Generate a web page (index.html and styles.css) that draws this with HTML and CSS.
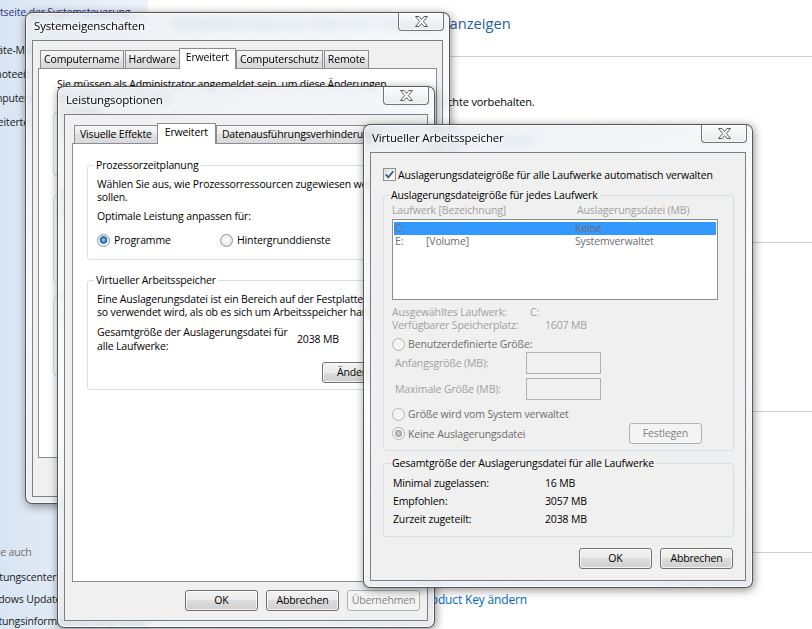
FILE: index.html
```html
<!DOCTYPE html>
<html lang="de">
<head>
    <meta charset="UTF-8">
    <title>System</title>
    <link rel="stylesheet" href="styles.css">
</head>
<body>
<div class="desktop">
    <!-- Systemsteuerung im Hintergrund -->
    <div class="page">
        <div class="nav">
            <ul class="nav-top">
                <li class="home">Startseite der Systemsteuerung</li>
                <li>Geräte-Manager</li>
                <li>Remoteeinstellungen</li>
                <li>Computerschutz</li>
                <li>Erweiterte Systemeinstellungen</li>
            </ul>
            <ul class="nav-bottom">
                <li class="see">Siehe auch</li>
                <li>Wartungscenter</li>
                <li>Windows Update</li>
                <li>Leistungsinformationen und -tools</li>
            </ul>
        </div>
        <div class="content">
            <h1>Basisinformationen über den Computer anzeigen</h1>
            <div class="section s-edition">Windows-Edition</div>
            <p class="line edition">Windows 7 Home Premium</p>
            <p class="line copy">Copyright © 2009 Microsoft Corporation. Alle Rechte vorbehalten.</p>
            <p class="line more"><a href="javascript:;">Weitere Features mit einer neuen Edition von Windows 7 erhalten</a></p>
            <div class="section s-system">System</div>
            <div class="section s-name">Einstellungen für Computernamen, Domäne und Arbeitsgruppe</div>
            <div class="section s-act">Windows-Aktivierung</div>
            <p class="line key"><a href="javascript:;">Product Key ändern</a></p>
        </div>
    </div>

    <!-- Systemeigenschaften -->
    <div class="window win-sys">
        <div class="titlebar">
            <span class="title">Systemeigenschaften</span>
            <div class="close"><svg width="15" height="11" viewBox="0 0 15 11"><path d="M1.5 .5h3.5l2.5 3 2.5-3h3.5l-4.2 5 4.2 5h-3.5l-2.5-3-2.5 3h-3.5l4.2-5z" fill="#fff" stroke="#5a5a5a" stroke-linejoin="round"/></svg></div>
        </div>
        <div class="client sys-body">
            <div class="tabs sys-tabs">
                <div class="tab">Computername</div>
                <div class="tab">Hardware</div>
                <div class="tab active">Erweitert</div>
                <div class="tab">Computerschutz</div>
                <div class="tab">Remote</div>
            </div>
            <div class="tabpanel">
                <p class="admin">Sie müssen als Administrator angemeldet sein, um diese Änderungen<br>durchführen zu können.</p>
                <fieldset class="group sys-group g1">
                    <legend>Leistung</legend>
                    <div class="gbody">Visuelle Effekte, Prozessorzeitplanung, Speichernutzung und virtueller Arbeitsspeicher</div>
                </fieldset>
                <fieldset class="group sys-group g2">
                    <legend>Benutzerprofile</legend>
                    <div class="gbody">Desktopeinstellungen bezüglich der Anmeldung</div>
                </fieldset>
                <fieldset class="group sys-group g3">
                    <legend>Starten und Wiederherstellen</legend>
                    <div class="gbody">Systemstart, Systemfehler und Debuginformationen</div>
                </fieldset>
            </div>
            <div class="buttons">
                <button class="btn">OK</button>
                <button class="btn">Abbrechen</button>
                <button class="btn off">Übernehmen</button>
            </div>
        </div>
    </div>

    <!-- Leistungsoptionen -->
    <div class="window win-perf">
        <div class="titlebar">
            <span class="title">Leistungsoptionen</span>
            <div class="close"><svg width="15" height="11" viewBox="0 0 15 11"><path d="M1.5 .5h3.5l2.5 3 2.5-3h3.5l-4.2 5 4.2 5h-3.5l-2.5-3-2.5 3h-3.5l4.2-5z" fill="#fff" stroke="#5a5a5a" stroke-linejoin="round"/></svg></div>
        </div>
        <div class="client perf-body">
            <div class="tabs">
                <div class="tab">Visuelle Effekte</div>
                <div class="tab active">Erweitert</div>
                <div class="tab">Datenausführungsverhinderung</div>
            </div>
            <div class="tabpanel perf-panel">
                <fieldset class="group perf-group cpu">
                    <legend>Prozessorzeitplanung</legend>
                    <p class="text">Wählen Sie aus, wie Prozessorressourcen zugewiesen werden<br>sollen.</p>
                    <p class="text tune">Optimale Leistung anpassen für:</p>
                    <div class="row radios">
                        <div class="opt opt-prog"><span class="radio on"></span>Programme</div>
                        <div class="opt"><span class="radio"></span>Hintergrunddienste</div>
                    </div>
                </fieldset>
                <fieldset class="group perf-group mem">
                    <legend>Virtueller Arbeitsspeicher</legend>
                    <p class="text">Eine Auslagerungsdatei ist ein Bereich auf der Festplatte, der von Windows<br>so verwendet wird, als ob es sich um Arbeitsspeicher handeln würde.</p>
                    <div class="row total">
                        <span class="total-label">Gesamtgröße der Auslagerungsdatei für<br>alle Laufwerke:</span>
                        <span>2038 MB</span>
                    </div>
                    <div class="row change">
                        <button class="btn">Ändern...</button>
                    </div>
                </fieldset>
            </div>
            <div class="buttons">
                <button class="btn">OK</button>
                <button class="btn">Abbrechen</button>
                <button class="btn off">Übernehmen</button>
            </div>
        </div>
    </div>

    <!-- Virtueller Arbeitsspeicher -->
    <div class="window win-vm">
        <div class="titlebar">
            <span class="title">Virtueller Arbeitsspeicher</span>
            <div class="close"><svg width="15" height="11" viewBox="0 0 15 11"><path d="M1.5 .5h3.5l2.5 3 2.5-3h3.5l-4.2 5 4.2 5h-3.5l-2.5-3-2.5 3h-3.5l4.2-5z" fill="#fff" stroke="#5a5a5a" stroke-linejoin="round"/></svg></div>
        </div>
        <div class="client vm-body">
            <div class="row auto">
                <span class="check"><svg width="11" height="11" viewBox="0 0 11 11"><path d="M1.8 5.4 4.3 8.3 9.3 2.2" fill="none" stroke="#40577f" stroke-width="1.8"/></svg></span>
                <span>Auslagerungsdateigröße für alle Laufwerke automatisch verwalten</span>
            </div>
            <fieldset class="group drives">
                <legend>Auslagerungsdateigröße für jedes Laufwerk</legend>
                <div class="row cols dim">
                    <span class="col-drive">Laufwerk [Bezeichnung]</span>
                    <span>Auslagerungsdatei (MB)</span>
                </div>
                <div class="listbox">
                    <div class="lrow sel"><span class="l-drive">C:</span><span class="l-name"></span><span>Keine</span></div>
                    <div class="lrow"><span class="l-drive">E:</span><span class="l-name">[Volume]</span><span>Systemverwaltet</span></div>
                </div>
                <div class="info dim">
                    <div class="irow"><span class="i-sel">Ausgewähltes Laufwerk:</span><span>C:</span></div>
                    <div class="irow"><span class="i-free">Verfügbarer Speicherplatz:</span><span>1607 MB</span></div>
                </div>
                <div class="row opt-row custom"><span class="radio off"></span><span class="dimr">Benutzerdefinierte Größe:</span></div>
                <div class="row size first"><span class="size-label dim">Anfangsgröße (MB):</span><span class="field"></span></div>
                <div class="row size second"><span class="size-label dim">Maximale Größe (MB):</span><span class="field"></span></div>
                <div class="row opt-row sys"><span class="radio off"></span><span class="dimr">Größe wird vom System verwaltet</span></div>
                <div class="row opt-row none">
                    <span class="radio off on"></span><span class="dimr">Keine Auslagerungsdatei</span>
                    <button class="btn off set">Festlegen</button>
                </div>
            </fieldset>
            <fieldset class="group totals">
                <legend>Gesamtgröße der Auslagerungsdatei für alle Laufwerke</legend>
                <div class="trow"><span class="t-label">Minimal zugelassen:</span><span>16 MB</span></div>
                <div class="trow"><span class="t-label">Empfohlen:</span><span>3057 MB</span></div>
                <div class="trow"><span class="t-label">Zurzeit zugeteilt:</span><span>2038 MB</span></div>
            </fieldset>
            <div class="buttons vm-buttons">
                <button class="btn">OK</button>
                <button class="btn">Abbrechen</button>
            </div>
        </div>
    </div>
</div>
</body>
</html>
```

FILE: styles.css
```css
body {
    margin: 0;
}

p {
    margin: 0;
}

a {
    color: #0066cc;
    text-decoration: none;
}

.desktop {
    position: relative;
    width: 812px;
    height: 629px;
    overflow: hidden;
    background: #fff;
    font-family: "Open Sans", "Noto Sans", sans-serif;
    font-size: 10.5px;
    letter-spacing: -0.15px;
    color: #000;
}

/* Hintergrundseite */
.page {
    display: flex;
    height: 100%;
}

.nav {
    display: flex;
    flex-direction: column;
    justify-content: space-between;
    width: 148px;
    flex: none;
    overflow: hidden;
    background: linear-gradient(to right, #dae5f3, #e7eef8 70%, #edf3fa);
}

.nav ul {
    list-style: none;
    margin: 0 0 0 -20px;
    padding: 0;
}

.nav li {
    height: 16px;
    line-height: 16px;
    white-space: nowrap;
    color: #1b1b1b;
}

.nav-top {
    display: flex;
    flex-direction: column;
    gap: 8px;
    padding-top: 4px !important;
}

.nav-top .home {
    margin-bottom: 14px;
    margin-left: 1px;
    color: #1e3287;
}

.nav-bottom {
    display: flex;
    flex-direction: column;
    gap: 6px;
}

.nav-bottom .see {
    color: #6d6d6d;
    margin-bottom: 3px;
}

.content {
    flex: 1;
    padding: 13px 0 0 25px;
    font-size: 11px;
    white-space: nowrap;
}

.content h1 {
    margin: 0;
    font-size: 14.7px;
    font-weight: normal;
    letter-spacing: 0;
    line-height: 20px;
    color: #1f5ca8;
}

.section {
    display: flex;
    align-items: center;
    height: 16px;
    color: #1e395b;
}

.section::after {
    content: "";
    flex: 1;
    margin-left: 6px;
    border-top: 1px solid #d0d0d0;
}

.s-edition { margin-top: 15px; }
.s-system { margin-top: 85px; }
.s-name { margin-top: 153px; }
.s-act { margin-top: 125px; }

.line {
    height: 16px;
    line-height: 16px;
    padding-left: 35px;
}

.edition { margin-top: 8px; }
.copy { margin-top: 6px; }
.more { margin-top: 23px; }

.key {
    margin-top: 32px;
    padding-left: 246px;
    font-size: 12px;
}

/* Fenster */
.window {
    position: absolute;
    box-sizing: border-box;
    display: flex;
    flex-direction: column;
    padding: 0 6px 6px;
    border: 1px solid rgba(35, 35, 35, 0.75);
    border-radius: 7px;
    background: linear-gradient(160deg, rgba(232, 236, 241, 0.75) 0%, rgba(250, 251, 252, 0.85) 45%, rgba(224, 229, 235, 0.75) 100%);
    backdrop-filter: blur(5px);
    box-shadow: 1px 2px 10px rgba(0, 0, 0, 0.45), inset 0 0 0 1px rgba(255, 255, 255, 0.75);
}

.win-sys {
    left: 25px;
    top: 12px;
    width: 425px;
    height: 492px;
}

.win-perf {
    left: 57px;
    top: 86px;
    width: 378px;
    height: 542px;
}

.win-vm {
    left: 363px;
    top: 124px;
    width: 390px;
    height: 464px;
}

.titlebar {
    position: relative;
    flex: none;
    display: flex;
    align-items: center;
    height: 27px;
}

.title {
    padding: 0 0 2px 2px;
    font-size: 11.5px;
    text-shadow: 0 0 6px #fff, 0 0 3px #fff;
}

.close {
    position: absolute;
    top: -1px;
    right: -1px;
    box-sizing: border-box;
    display: flex;
    align-items: center;
    justify-content: center;
    width: 46px;
    height: 19px;
    border: 1px solid rgba(60, 60, 60, 0.7);
    border-radius: 0 0 4px 4px;
    background: linear-gradient(rgba(255, 255, 255, 0.6), rgba(226, 229, 233, 0.6));
    box-shadow: inset 0 0 0 1px rgba(255, 255, 255, 0.6);
}

.client {
    flex: 1;
    min-height: 0;
    box-sizing: border-box;
    display: flex;
    flex-direction: column;
    border: 1px solid #7f7f7f;
    background: #f0f0f0;
}

/* Reiter */
.tabs {
    position: relative;
    z-index: 1;
    display: flex;
    align-items: flex-end;
    flex: none;
    height: 20px;
    padding-left: 2px;
}

.tab {
    box-sizing: border-box;
    height: 18px;
    margin-right: 1px;
    padding: 0 5px;
    line-height: 16px;
    white-space: nowrap;
    border: 1px solid #898c95;
    border-bottom: none;
    background: linear-gradient(#f6f6f6, #ebebeb 49%, #e1e1e1 50%, #d9d9d9);
}

.tab.active {
    height: 21px;
    margin: 0 0 -1px -2px;
    padding: 0 7px;
    line-height: 17px;
    background: #fff;
}

.sys-tabs .tab {
    padding: 0 3px;
}

.sys-tabs .tab.active {
    padding: 0 6px;
}

.tabpanel {
    flex: 1;
    min-height: 0;
    overflow: hidden;
    border: 1px solid #898c95;
    background: #fff;
}

/* Buttons */
.buttons {
    display: flex;
    justify-content: flex-end;
    gap: 8px;
    flex: none;
    margin: 8px 0 9px;
}

.btn {
    box-sizing: border-box;
    width: 73px;
    height: 21px;
    padding: 0;
    border: 1px solid #707070;
    border-radius: 3px;
    background: linear-gradient(#f2f2f2, #ebebeb 50%, #dddddd 50%, #cfcfcf);
    box-shadow: inset 0 0 0 1px rgba(255, 255, 255, 0.75);
    font: inherit;
    letter-spacing: inherit;
    line-height: 19px;
    color: #000;
    text-align: center;
}

.btn.off {
    border-color: #adb2b5;
    background: #f4f4f4;
    box-shadow: none;
    color: #838383;
}

/* Gruppenrahmen */
.group {
    min-width: 0;
    margin: 0;
    padding: 0 0 0 8px;
    border: 1px solid #d5dfe5;
    border-radius: 3px;
}

.group legend {
    margin-left: -3px;
    padding: 0 2px;
    line-height: 14px;
}

.row {
    display: flex;
    align-items: center;
    white-space: nowrap;
}

.radio {
    box-sizing: border-box;
    flex: none;
    width: 13px;
    height: 13px;
    margin-right: 4px;
    border: 1px solid #8e8f8f;
    border-radius: 50%;
    background: radial-gradient(circle at 50% 40%, #fff, #ececec 60%, #d4d4d4);
}

.radio.on {
    background: radial-gradient(circle at 50% 45%, #b3e3fb 0, #3f93dc 1.8px, #1c5a9d 3.4px, #c9d2dc 4px, #fff 5px, #e6e6e6);
}

.radio.off {
    border-color: #b4b4b4;
    background: #f4f4f4;
}

.radio.off.on {
    background: radial-gradient(circle, #d0d0d0 0, #a2a2a2 3.3px, #f4f4f4 4px);
}

.dim {
    color: #a0a0a0;
}

.dimr {
    color: #6d6d6d;
}

/* Systemeigenschaften */
.sys-body {
    padding: 7px 5px 0;
}

.admin {
    padding: 8px 0 0 18px;
    line-height: 14px;
    white-space: nowrap;
}

.sys-group {
    margin-left: 14px;
    margin-right: 14px;
}

.sys-group .gbody {
    overflow: hidden;
    padding-top: 4px;
    white-space: nowrap;
}

.g1 { margin-top: 0; }
.g1 .gbody { height: 52px; }
.g2 { margin-top: 12px; }
.g2 .gbody { height: 76px; }
.g3 { margin-top: 7px; }
.g3 .gbody { height: 67px; }

/* Leistungsoptionen */
.perf-body {
    padding: 8px 7px 0;
}

.perf-panel {
    padding: 14px 14px 0;
}

.perf-group {
    padding-left: 9px;
}

.text {
    line-height: 13px;
    white-space: nowrap;
}

.cpu .text:first-of-type {
    margin-top: 6px;
}

.cpu .tune {
    margin-top: 6px;
}

.radios {
    height: 14px;
    margin-top: 10px;
    margin-bottom: 12px;
}

.opt {
    display: flex;
    align-items: center;
}

.opt-prog {
    width: 123px;
}

.mem {
    margin-top: 13px;
}

.mem .text {
    margin-top: 6px;
}

.total {
    margin-top: 6px;
    line-height: 14px;
}

.total-label {
    width: 200px;
}

.change {
    justify-content: flex-end;
    margin: 9px 9px 6px 0;
}

/* Virtueller Arbeitsspeicher */
.vm-body {
    padding: 14px 11px 0 12px;
}

.auto {
    height: 15px;
}

.check {
    box-sizing: border-box;
    display: flex;
    align-items: center;
    justify-content: center;
    flex: none;
    width: 13px;
    height: 13px;
    margin-right: 2px;
    border: 1px solid #8e8f8f;
    background: linear-gradient(135deg, #dcdcdc, #f7f7f7 70%, #fff);
}

.drives {
    margin-top: 6px;
    padding-bottom: 6px;
}

.cols {
    height: 14px;
    margin-top: 1px;
}

.col-drive {
    width: 185px;
}

.listbox {
    box-sizing: border-box;
    width: 326px;
    height: 81px;
    margin-top: 2px;
    padding: 2px 1px;
    border: 1px solid #8a8e95;
    background: #fff;
}

.lrow {
    display: flex;
    height: 13px;
    padding-left: 1px;
    line-height: 13px;
    color: #6d6d6d;
}

.lrow.sel {
    background: #3399ff;
}

.l-drive {
    width: 31px;
}

.l-name {
    width: 149px;
}

.info {
    margin-top: 6px;
    line-height: 13px;
    white-space: nowrap;
}

.irow {
    display: flex;
}

.i-sel {
    width: 138px;
}

.i-free {
    width: 153px;
}

.opt-row .radio {
    margin-right: 3px;
}

.custom {
    height: 14px;
    margin-top: 5px;
}

.size {
    height: 22px;
    padding-left: 3px;
}

.size.first {
    margin-top: 1px;
}

.size.second {
    margin-top: 4px;
}

.size-label {
    width: 131px;
}

.field {
    box-sizing: border-box;
    width: 75px;
    height: 22px;
    border: 1px solid #adb2b5;
    background: #f0f0f0;
}

.sys {
    height: 14px;
    margin-top: 7px;
}

.none {
    height: 21px;
    margin-top: 2px;
}

.set {
    margin: 0 31px 0 auto;
}

.totals {
    margin-top: 5px;
    padding: 4px 0 8px 9px;
}

.trow {
    display: flex;
    height: 18px;
    line-height: 18px;
}

.t-label {
    width: 152px;
}

.vm-buttons {
    margin: 11px 1px 0 0;
}
```
